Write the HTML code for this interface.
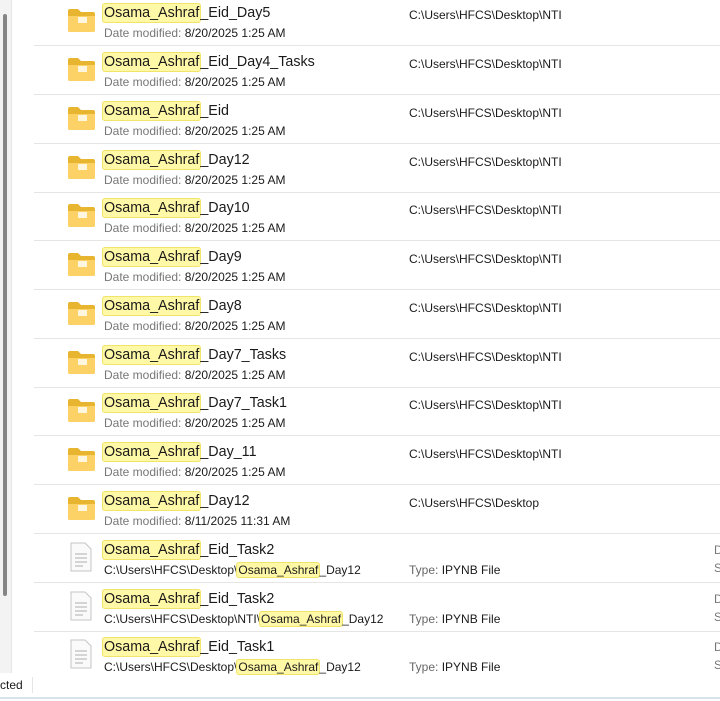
<!DOCTYPE html>
<html><head><style>
body{margin:0;width:720px;height:701px;overflow:hidden;background:#fff;font-family:"Segoe UI","Liberation Sans",sans-serif;position:relative;color:#1a1a1a}
.track{position:absolute;left:0;top:0;width:11px;height:673px;background:#f3f3f3;border-right:1px solid #e6e6e6}
.thumb{position:absolute;left:3px;top:14px;width:4px;height:582px;background:#858585;border-radius:2px}
.row{position:absolute;left:34px;width:686px;height:48px;border-bottom:1px solid #e5e5e5}
.t{position:absolute;left:70px;top:8px;font-size:14.3px;white-space:nowrap}
.s{position:absolute;left:70px;top:29px;font-size:12px;color:#1a1a1a;white-space:nowrap}
.s .l{color:#777}
.p{position:absolute;left:375px;top:11px;font-size:12px;white-space:nowrap}
.ty{position:absolute;left:375px;top:29px;font-size:12px;white-space:nowrap}
.ty .l{color:#666}
.r{position:absolute;left:680px;font-size:12px;color:#777}
.h{background:#fff8a6;border:1px solid #f1e46a;border-radius:3px;padding:1px 1px;margin:0 -1px 0 -2px}
.s .h{padding:0 1px;margin:0 -1px}
.fold{position:absolute;left:33px;top:11px}
.doc{position:absolute;left:36px;top:8px}
.status{position:absolute;left:0;top:673px;width:720px;height:24px;border-bottom:2px solid #d6e3ee;font-size:12px}
</style></head><body>
<div class="track"><div class="thumb"></div></div>
<div class="row" style="top:-3px"><svg class="fold" width="29" height="24"><path d="M1 3q0-2 2-2h8l3 3h12q2 0 2 2v16q0 2-2 2H3q-2 0-2-2z" fill="#e8b530"/><path d="M1 8h27v14q0 2-2 2H3q-2 0-2-2z" fill="#fcd267"/><rect x="11" y="9" width="9" height="6" fill="#fff" opacity=".8"/></svg><div class="t"><span class="h">Osama_Ashraf</span>_Eid_Day5</div><div class="s"><span class="l">Date modified:</span> 8/20/2025 1:25 AM</div><div class="p">C:\Users\HFCS\Desktop\NTI</div></div>
<div class="row" style="top:46px"><svg class="fold" width="29" height="24"><path d="M1 3q0-2 2-2h8l3 3h12q2 0 2 2v16q0 2-2 2H3q-2 0-2-2z" fill="#e8b530"/><path d="M1 8h27v14q0 2-2 2H3q-2 0-2-2z" fill="#fcd267"/><rect x="11" y="9" width="9" height="6" fill="#fff" opacity=".8"/></svg><div class="t"><span class="h">Osama_Ashraf</span>_Eid_Day4_Tasks</div><div class="s"><span class="l">Date modified:</span> 8/20/2025 1:25 AM</div><div class="p">C:\Users\HFCS\Desktop\NTI</div></div>
<div class="row" style="top:95px"><svg class="fold" width="29" height="24"><path d="M1 3q0-2 2-2h8l3 3h12q2 0 2 2v16q0 2-2 2H3q-2 0-2-2z" fill="#e8b530"/><path d="M1 8h27v14q0 2-2 2H3q-2 0-2-2z" fill="#fcd267"/><rect x="11" y="9" width="9" height="6" fill="#fff" opacity=".8"/></svg><div class="t"><span class="h">Osama_Ashraf</span>_Eid</div><div class="s"><span class="l">Date modified:</span> 8/20/2025 1:25 AM</div><div class="p">C:\Users\HFCS\Desktop\NTI</div></div>
<div class="row" style="top:144px"><svg class="fold" width="29" height="24"><path d="M1 3q0-2 2-2h8l3 3h12q2 0 2 2v16q0 2-2 2H3q-2 0-2-2z" fill="#e8b530"/><path d="M1 8h27v14q0 2-2 2H3q-2 0-2-2z" fill="#fcd267"/><rect x="11" y="9" width="9" height="6" fill="#fff" opacity=".8"/></svg><div class="t"><span class="h">Osama_Ashraf</span>_Day12</div><div class="s"><span class="l">Date modified:</span> 8/20/2025 1:25 AM</div><div class="p">C:\Users\HFCS\Desktop\NTI</div></div>
<div class="row" style="top:192px"><svg class="fold" width="29" height="24"><path d="M1 3q0-2 2-2h8l3 3h12q2 0 2 2v16q0 2-2 2H3q-2 0-2-2z" fill="#e8b530"/><path d="M1 8h27v14q0 2-2 2H3q-2 0-2-2z" fill="#fcd267"/><rect x="11" y="9" width="9" height="6" fill="#fff" opacity=".8"/></svg><div class="t"><span class="h">Osama_Ashraf</span>_Day10</div><div class="s"><span class="l">Date modified:</span> 8/20/2025 1:25 AM</div><div class="p">C:\Users\HFCS\Desktop\NTI</div></div>
<div class="row" style="top:241px"><svg class="fold" width="29" height="24"><path d="M1 3q0-2 2-2h8l3 3h12q2 0 2 2v16q0 2-2 2H3q-2 0-2-2z" fill="#e8b530"/><path d="M1 8h27v14q0 2-2 2H3q-2 0-2-2z" fill="#fcd267"/><rect x="11" y="9" width="9" height="6" fill="#fff" opacity=".8"/></svg><div class="t"><span class="h">Osama_Ashraf</span>_Day9</div><div class="s"><span class="l">Date modified:</span> 8/20/2025 1:25 AM</div><div class="p">C:\Users\HFCS\Desktop\NTI</div></div>
<div class="row" style="top:290px"><svg class="fold" width="29" height="24"><path d="M1 3q0-2 2-2h8l3 3h12q2 0 2 2v16q0 2-2 2H3q-2 0-2-2z" fill="#e8b530"/><path d="M1 8h27v14q0 2-2 2H3q-2 0-2-2z" fill="#fcd267"/><rect x="11" y="9" width="9" height="6" fill="#fff" opacity=".8"/></svg><div class="t"><span class="h">Osama_Ashraf</span>_Day8</div><div class="s"><span class="l">Date modified:</span> 8/20/2025 1:25 AM</div><div class="p">C:\Users\HFCS\Desktop\NTI</div></div>
<div class="row" style="top:339px"><svg class="fold" width="29" height="24"><path d="M1 3q0-2 2-2h8l3 3h12q2 0 2 2v16q0 2-2 2H3q-2 0-2-2z" fill="#e8b530"/><path d="M1 8h27v14q0 2-2 2H3q-2 0-2-2z" fill="#fcd267"/><rect x="11" y="9" width="9" height="6" fill="#fff" opacity=".8"/></svg><div class="t"><span class="h">Osama_Ashraf</span>_Day7_Tasks</div><div class="s"><span class="l">Date modified:</span> 8/20/2025 1:25 AM</div><div class="p">C:\Users\HFCS\Desktop\NTI</div></div>
<div class="row" style="top:387px"><svg class="fold" width="29" height="24"><path d="M1 3q0-2 2-2h8l3 3h12q2 0 2 2v16q0 2-2 2H3q-2 0-2-2z" fill="#e8b530"/><path d="M1 8h27v14q0 2-2 2H3q-2 0-2-2z" fill="#fcd267"/><rect x="11" y="9" width="9" height="6" fill="#fff" opacity=".8"/></svg><div class="t"><span class="h">Osama_Ashraf</span>_Day7_Task1</div><div class="s"><span class="l">Date modified:</span> 8/20/2025 1:25 AM</div><div class="p">C:\Users\HFCS\Desktop\NTI</div></div>
<div class="row" style="top:436px"><svg class="fold" width="29" height="24"><path d="M1 3q0-2 2-2h8l3 3h12q2 0 2 2v16q0 2-2 2H3q-2 0-2-2z" fill="#e8b530"/><path d="M1 8h27v14q0 2-2 2H3q-2 0-2-2z" fill="#fcd267"/><rect x="11" y="9" width="9" height="6" fill="#fff" opacity=".8"/></svg><div class="t"><span class="h">Osama_Ashraf</span>_Day_11</div><div class="s"><span class="l">Date modified:</span> 8/20/2025 1:25 AM</div><div class="p">C:\Users\HFCS\Desktop\NTI</div></div>
<div class="row" style="top:485px"><svg class="fold" width="29" height="24"><path d="M1 3q0-2 2-2h8l3 3h12q2 0 2 2v16q0 2-2 2H3q-2 0-2-2z" fill="#e8b530"/><path d="M1 8h27v14q0 2-2 2H3q-2 0-2-2z" fill="#fcd267"/><rect x="11" y="9" width="9" height="6" fill="#fff" opacity=".8"/></svg><div class="t"><span class="h">Osama_Ashraf</span>_Day12</div><div class="s"><span class="l">Date modified:</span> 8/11/2025 11:31 AM</div><div class="p">C:\Users\HFCS\Desktop</div></div>
<div class="row" style="top:534px"><svg class="doc" width="22" height="30"><path d="M1 1h14l6 6v22H1z" fill="#fafafa" stroke="#c4c4c4"/><path d="M5 12h12M5 16h12M5 20h12M5 24h8" stroke="#bdbdbd" stroke-width="1.3"/></svg><div class="t"><span class="h">Osama_Ashraf</span>_Eid_Task2</div><div class="s">C:\Users\HFCS\Desktop\<span class="h">Osama_Ashraf</span>_Day12</div><div class="ty"><span class="l">Type:</span> IPYNB File</div><div class="r" style="top:9px">D</div><div class="r" style="top:27px">S</div></div>
<div class="row" style="top:583px"><svg class="doc" width="22" height="30"><path d="M1 1h14l6 6v22H1z" fill="#fafafa" stroke="#c4c4c4"/><path d="M5 12h12M5 16h12M5 20h12M5 24h8" stroke="#bdbdbd" stroke-width="1.3"/></svg><div class="t"><span class="h">Osama_Ashraf</span>_Eid_Task2</div><div class="s">C:\Users\HFCS\Desktop\NTI\<span class="h">Osama_Ashraf</span>_Day12</div><div class="ty"><span class="l">Type:</span> IPYNB File</div><div class="r" style="top:9px">D</div><div class="r" style="top:27px">S</div></div>
<div class="row" style="top:631px;border-bottom:none"><svg class="doc" width="22" height="30"><path d="M1 1h14l6 6v22H1z" fill="#fafafa" stroke="#c4c4c4"/><path d="M5 12h12M5 16h12M5 20h12M5 24h8" stroke="#bdbdbd" stroke-width="1.3"/></svg><div class="t"><span class="h">Osama_Ashraf</span>_Eid_Task1</div><div class="s">C:\Users\HFCS\Desktop\<span class="h">Osama_Ashraf</span>_Day12</div><div class="ty"><span class="l">Type:</span> IPYNB File</div><div class="r" style="top:9px">D</div><div class="r" style="top:27px">S</div></div>
<div class="status"><span style="position:absolute;left:0;top:5px">cted</span><span style="position:absolute;left:32px;top:4px;width:1px;height:16px;background:#e5e5e5"></span></div>
</body></html>
